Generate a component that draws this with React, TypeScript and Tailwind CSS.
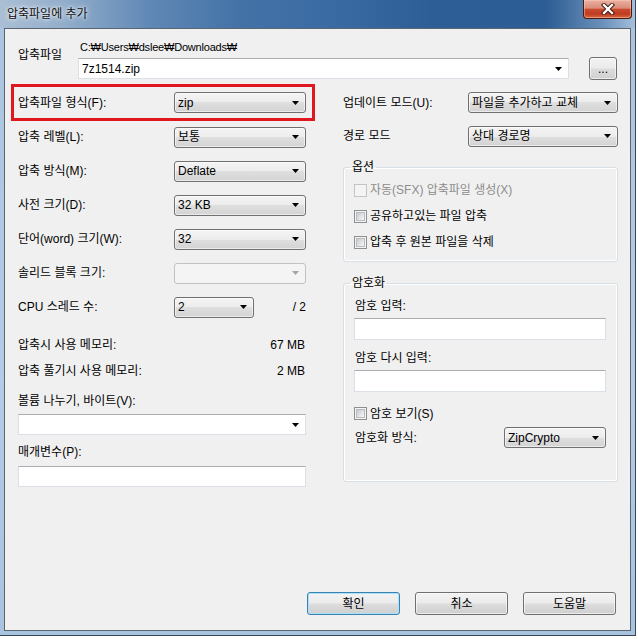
import React from "react";

function Arrow({ gray }: { gray?: boolean }) {
  return (
    <svg width="7" height="4" viewBox="0 0 7 4" className="shrink-0">
      <path d="M0 0H7L3.5 4Z" fill={gray ? "#a6a6a6" : "#000"} />
    </svg>
  );
}

function Combo({ value, className = "" }: { value: string; className?: string }) {
  return (
    <div
      className={`flex h-[21px] items-center justify-between rounded-[3px] border border-[#707070] bg-[linear-gradient(to_bottom,#f4f4f4_0%,#ececec_50%,#dfdfdf_50%,#d3d3d3_100%)] pl-[3px] pr-[6px] shadow-[inset_0_0_0_1px_rgba(255,255,255,0.55)] ${className}`}
    >
      <span className="leading-[14px] whitespace-nowrap">{value}</span>
      <Arrow />
    </div>
  );
}

function DisabledCombo({ className = "" }: { className?: string }) {
  return (
    <div
      className={`flex h-[21px] items-center justify-end rounded-[3px] border border-[#bfc3c6] bg-[#f4f4f4] pr-[6px] ${className}`}
    >
      <Arrow gray />
    </div>
  );
}

function EditCombo({ value = "", className = "" }: { value?: string; className?: string }) {
  return (
    <div
      className={`flex h-[21px] items-center justify-between border border-[#dbdfe6] border-t-[#abadb3] bg-white pl-[3px] pr-[6px] ${className}`}
    >
      <span className="leading-[14px] whitespace-nowrap">{value}</span>
      <Arrow />
    </div>
  );
}

function TextBox({ className = "" }: { className?: string }) {
  return (
    <div
      className={`border border-[#dbdfe6] border-t-[#abadb3] bg-white ${className}`}
    />
  );
}

function Check({ disabled }: { disabled?: boolean }) {
  if (disabled) {
    return (
      <div className="h-[13px] w-[13px] shrink-0 border border-[#c4c4c4] bg-[#f4f4f4]" />
    );
  }
  return (
    <div className="h-[13px] w-[13px] shrink-0 border border-[#8e8f8f] bg-[#f4f4f4] p-[1px]">
      <div className="h-full w-full border border-[#b8bcc1] bg-[linear-gradient(135deg,#c6cacf_0%,#e2e3e5_55%,#f6f6f6_100%)]" />
    </div>
  );
}

function Button({
  children,
  isDefault,
  className = "",
}: {
  children: React.ReactNode;
  isDefault?: boolean;
  className?: string;
}) {
  return (
    <div
      className={`flex items-center justify-center rounded-[3px] border bg-[linear-gradient(to_bottom,#f3f3f3_0%,#ebebeb_48%,#dddddd_52%,#cfcfcf_100%)] ${
        isDefault
          ? "border-[#3c7fb1] shadow-[inset_0_0_0_1px_#a8e3fb]"
          : "border-[#707070] shadow-[inset_0_0_0_1px_rgba(255,255,255,0.6)]"
      } ${className}`}
    >
      <span className="leading-[14px]">{children}</span>
    </div>
  );
}

function Row({ label, children }: { label: string; children: React.ReactNode }) {
  return (
    <div className="flex h-[34px] items-center pl-[7px] pr-[9px]">
      <span className="w-[156px] shrink-0 leading-[14px] whitespace-nowrap">{label}</span>
      {children}
    </div>
  );
}

export default function App() {
  return (
    <div className="font-['Liberation_Sans','Noto_Sans_CJK_KR',sans-serif] text-[12px] text-black">
      <div className="flex h-[636px] w-[636px] flex-col border-b border-r border-[#3b4652] bg-[linear-gradient(to_bottom,#aac4df_0%,#b3cce6_60%,#a7c3e0_100%)]">
        {/* Title bar */}
        <div className="flex h-[28px] shrink-0 items-start bg-[linear-gradient(to_right,#aabed4_0%,#93aecb_10%,#5f87b5_24%,#4372a7_38%,#3a6ba2_52%,#2d5f96_68%,#2c5d94_86%,#6b91bb_95%,#a4bfdb_100%)]">
          <span className="pl-[7px] pt-[7px] leading-[14px] text-[#101010] [text-shadow:0_0_6px_rgba(255,255,255,0.95),0_0_3px_rgba(255,255,255,0.9)]">
            압축파일에 추가
          </span>
          <div className="ml-auto mr-[3px] flex h-[19px] w-[49px] items-center justify-center rounded-b-[4px] border border-t-0 border-[#4a1a12] bg-[linear-gradient(to_bottom,#eab0a2_0%,#dc8c78_45%,#c64a2f_52%,#c13b20_78%,#d66a44_100%)] shadow-[inset_0_0_0_1px_rgba(255,210,190,0.45)]">
            <svg width="14" height="12" viewBox="0 0 14 12">
              <path d="M3 2L11 10M11 2L3 10" stroke="#3a0e06" strokeWidth="4.2" strokeLinecap="square" />
              <path d="M3 2L11 10M11 2L3 10" stroke="#ffffff" strokeWidth="2.4" strokeLinecap="square" />
            </svg>
          </div>
        </div>

        {/* Client area */}
        <div className="mb-[4px] ml-[4px] mr-[4px] flex flex-1 flex-col border border-[#5c6670] bg-[#f0f0f0] pt-[11px]">
          {/* Archive path */}
          <div className="flex items-start pl-[13px]">
            <div className="w-[60px] shrink-0 pt-[8px] leading-[14px]">압축파일</div>
            <div className="flex w-[491px] flex-col">
              <div className="h-[14px] pl-[2px] text-[11px] leading-[14px] tracking-[-0.2px]">
                C:₩Users₩dslee₩Downloads₩
              </div>
              <EditCombo value="7z1514.zip" className="mt-[4px]" />
            </div>
            <Button className="ml-[20px] mt-[17px] h-[23px] w-[28px]">...</Button>
          </div>

          {/* Two columns */}
          <div className="mt-[4px] flex">
            {/* Left column */}
            <div className="ml-[6px] flex w-[304px] shrink-0 flex-col">
              <div className="mb-[-1px] flex h-[37px] items-center border-[3px] border-[#e1171f] pl-[4px] pr-[6px]">
                <span className="w-[156px] shrink-0 leading-[14px]">압축파일 형식(F):</span>
                <Combo value="zip" className="w-[132px]" />
              </div>
              <Row label="압축 레벨(L):">
                <Combo value="보통" className="w-[132px]" />
              </Row>
              <Row label="압축 방식(M):">
                <Combo value="Deflate" className="w-[132px]" />
              </Row>
              <Row label="사전 크기(D):">
                <Combo value="32 KB" className="w-[132px]" />
              </Row>
              <Row label="단어(word) 크기(W):">
                <Combo value="32" className="w-[132px]" />
              </Row>
              <Row label="솔리드 블록 크기:">
                <DisabledCombo className="w-[132px]" />
              </Row>
              <Row label="CPU 스레드 수:">
                <Combo value="2" className="w-[80px]" />
                <span className="flex-1 text-right leading-[14px]">/ 2</span>
              </Row>
              <div className="mt-[8px] flex h-[26px] items-center justify-between pl-[7px] pr-[10px]">
                <span className="leading-[14px]">압축시 사용 메모리:</span>
                <span className="leading-[14px]">67 MB</span>
              </div>
              <div className="flex h-[26px] items-center justify-between pl-[7px] pr-[10px]">
                <span className="leading-[14px]">압축 풀기시 사용 메모리:</span>
                <span className="leading-[14px]">2 MB</span>
              </div>
              <div className="mt-[10px] h-[14px] pl-[7px] leading-[14px]">볼륨 나누기, 바이트(V):</div>
              <div className="mt-[6px] pl-[7px] pr-[9px]">
                <EditCombo />
              </div>
              <div className="mt-[10px] h-[14px] pl-[7px] leading-[14px]">매개변수(P):</div>
              <div className="mt-[7px] pl-[7px] pr-[9px]">
                <TextBox className="h-[21px]" />
              </div>
            </div>

            {/* Right column */}
            <div className="ml-[28px] flex w-[275px] shrink-0 flex-col">
              <div className="flex h-[37px] items-center">
                <span className="flex-1 leading-[14px]">업데이트 모드(U):</span>
                <Combo value="파일을 추가하고 교체" className="w-[150px]" />
              </div>
              <div className="flex h-[30px] items-center">
                <span className="flex-1 leading-[14px]">경로 모드</span>
                <Combo value="상대 경로명" className="w-[150px]" />
              </div>

              <fieldset className="mt-[9px] rounded-[3px] border border-[#d5dfe5] shadow-[inset_0_0_0_1px_#ffffff]">
                <legend className="ml-[6px] px-[2px] leading-[14px]">옵션</legend>
                <div className="flex flex-col pb-[6px] pl-[10px] pr-[10px] pt-[3px]">
                  <div className="flex h-[26px] items-center gap-[3px]">
                    <Check disabled />
                    <span className="leading-[14px] text-[#8d8d8d]">자동(SFX) 압축파일 생성(X)</span>
                  </div>
                  <div className="flex h-[26px] items-center gap-[3px]">
                    <Check />
                    <span className="leading-[14px]">공유하고있는 파일 압축</span>
                  </div>
                  <div className="flex h-[26px] items-center gap-[3px]">
                    <Check />
                    <span className="leading-[14px]">압축 후 원본 파일을 삭제</span>
                  </div>
                </div>
              </fieldset>

              <fieldset className="mt-[14px] rounded-[3px] border border-[#d5dfe5] shadow-[inset_0_0_0_1px_#ffffff]">
                <legend className="ml-[6px] px-[2px] leading-[14px]">암호화</legend>
                <div className="flex flex-col pb-[33px] pl-[10px] pr-[11px]">
                  <div className="mt-[9px] h-[14px] pl-[1px] leading-[14px]">암호 입력:</div>
                  <TextBox className="mt-[5px] h-[22px]" />
                  <div className="mt-[11px] h-[14px] pl-[1px] leading-[14px]">암호 다시 입력:</div>
                  <TextBox className="mt-[5px] h-[22px]" />
                  <div className="mt-[15px] flex h-[13px] items-center gap-[3px]">
                    <Check />
                    <span className="leading-[14px]">암호 보기(S)</span>
                  </div>
                  <div className="mt-[7px] flex h-[21px] items-center">
                    <span className="flex-1 pl-[1px] leading-[14px]">암호화 방식:</span>
                    <Combo value="ZipCrypto" className="w-[102px]" />
                  </div>
                </div>
              </fieldset>
            </div>
          </div>

          {/* Buttons */}
          <div className="mt-auto flex justify-end gap-[15px] pb-[15px] pr-[14px]">
            <Button isDefault className="h-[23px] w-[93px]">확인</Button>
            <Button className="h-[23px] w-[93px]">취소</Button>
            <Button className="h-[23px] w-[93px]">도움말</Button>
          </div>
        </div>
      </div>
    </div>
  );
}
